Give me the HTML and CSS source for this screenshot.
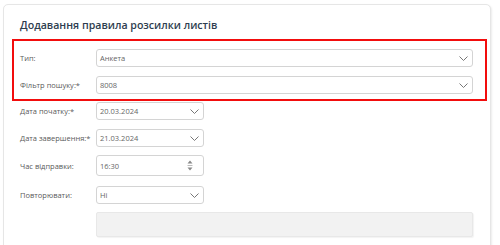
FILE: index.html
```html
<!DOCTYPE html>
<html lang="uk">
<head>
  <meta charset="UTF-8">
  <meta name="viewport" content="width=device-width, initial-scale=1.0">
  <title>Додавання правила розсилки листів</title>
  <link rel="stylesheet" href="styles.css">
</head>
<body>
  <div class="card">
    <h2 class="card-title">Додавання правила розсилки листів</h2>

    <div class="highlight">
      <div class="row">
        <label class="row-label">Тип:</label>
        <div class="field field-wide">
          <span>Анкета</span>
          <svg class="chevron" width="9" height="5" viewBox="0 0 9 5"><path d="M0.5 0.5 L4.5 4.5 L8.5 0.5" fill="none" stroke="#777" stroke-width="1"/></svg>
        </div>
      </div>
      <div class="row row-last">
        <label class="row-label">Фільтр пошуку:*</label>
        <div class="field field-wide">
          <span>8008</span>
          <svg class="chevron" width="9" height="5" viewBox="0 0 9 5"><path d="M0.5 0.5 L4.5 4.5 L8.5 0.5" fill="none" stroke="#777" stroke-width="1"/></svg>
        </div>
      </div>
    </div>

    <div class="row">
      <label class="row-label">Дата початку:*</label>
      <div class="field field-short">
        <span>20.03.2024</span>
        <svg class="chevron" width="9" height="5" viewBox="0 0 9 5"><path d="M0.5 0.5 L4.5 4.5 L8.5 0.5" fill="none" stroke="#777" stroke-width="1"/></svg>
      </div>
    </div>
    <div class="row row-tight">
      <label class="row-label">Дата завершення:*</label>
      <div class="field field-short">
        <span>21.03.2024</span>
        <svg class="chevron" width="9" height="5" viewBox="0 0 9 5"><path d="M0.5 0.5 L4.5 4.5 L8.5 0.5" fill="none" stroke="#777" stroke-width="1"/></svg>
      </div>
    </div>
    <div class="row row-loose">
      <label class="row-label">Час відправки:</label>
      <div class="field field-short field-time">
        <span>16:30</span>
        <svg class="spinner" width="6" height="11" viewBox="0 0 6 11"><path d="M0.5 3.5 L3 0.5 L5.5 3.5 Z" fill="#888"/><path d="M0.5 5.5 H5.5" stroke="#bbb" stroke-width="1"/><path d="M0.5 7.5 L3 10.5 L5.5 7.5 Z" fill="#888"/></svg>
      </div>
    </div>
    <div class="row row-tight">
      <label class="row-label">Повторювати:</label>
      <div class="field field-short">
        <span>Ні</span>
        <svg class="chevron" width="9" height="5" viewBox="0 0 9 5"><path d="M0.5 0.5 L4.5 4.5 L8.5 0.5" fill="none" stroke="#777" stroke-width="1"/></svg>
      </div>
    </div>
    <div class="row">
      <span class="row-label"></span>
      <div class="note-box"></div>
    </div>
  </div>
</body>
</html>
```

FILE: styles.css
```css
body {
  margin: 0;
  background-color: #fff;
  font-family: "Open Sans", "Noto Sans", sans-serif;
}
.card {
  margin: 4px 9px 0 3px;
  padding: 13px 17px 30px 16px;
  background-color: #fff;
  border: 1px solid #e6e6e6;
  border-radius: 5px;
  box-shadow: 1px 1px 2px rgba(0, 0, 0, 0.08);
}
.card-title {
  margin: 0 0 7px 0;
  font-size: 10.6px;
  line-height: 14px;
  font-weight: 600;
  color: #2e3d4f;
}
.highlight {
  margin: 0 -14px 1px -8px;
  padding: 8px 12px 5px 6px;
  border: 2px solid #f20d0d;
}
.row {
  display: flex;
  align-items: center;
  margin-bottom: 9px;
}
.row-last {
  margin-bottom: 0;
}
.row-tight {
  margin-bottom: 8px;
}
.row-loose {
  margin-bottom: 10px;
}
.row-label {
  width: 76px;
  flex-shrink: 0;
  font-size: 7.5px;
  color: #5a5a5a;
}
.field {
  display: flex;
  align-items: center;
  justify-content: space-between;
  box-sizing: border-box;
  height: 18px;
  padding: 0 4px 0 3px;
  border: 1px solid #d4d4d4;
  border-radius: 3px;
  font-size: 7.5px;
  color: #666;
  background-color: #fff;
}
.field-wide {
  flex: 1;
}
.field-short {
  width: 108px;
}
.field-time {
  height: 21px;
  padding-right: 10px;
}
.chevron {
  display: block;
}
.spinner {
  display: block;
}
.note-box {
  flex: 1;
  height: 25px;
  box-sizing: border-box;
  background-color: #f2f2f2;
  border: 1px solid #e8e8e8;
  border-radius: 2px;
  box-shadow: 1px 1px 1px rgba(0, 0, 0, 0.05);
}
```
